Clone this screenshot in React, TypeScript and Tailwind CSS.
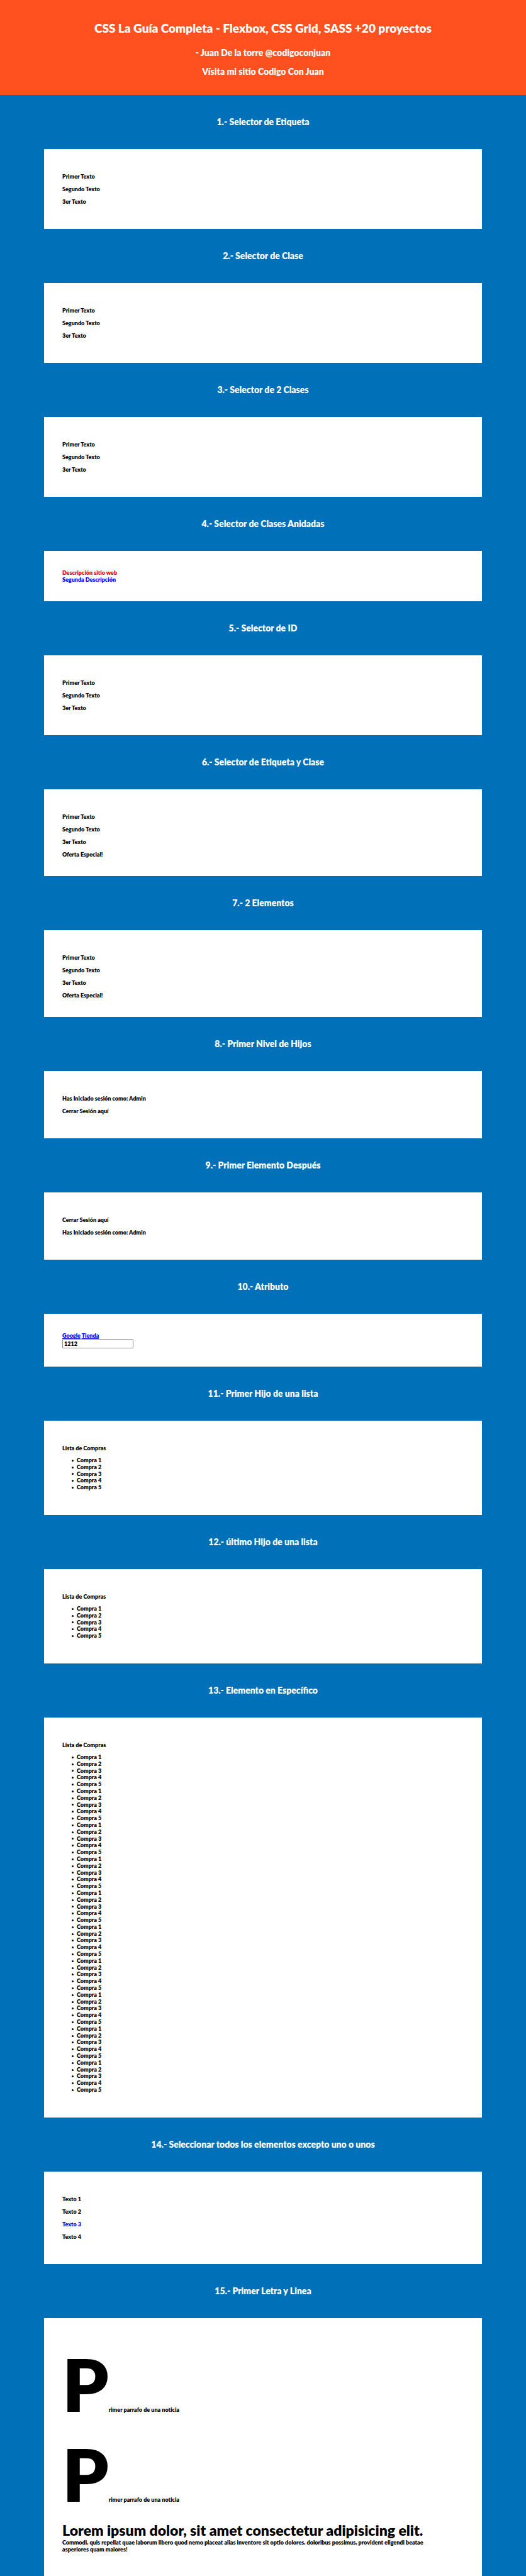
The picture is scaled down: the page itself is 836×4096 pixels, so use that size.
import type { ReactNode } from "react";

type SectionProps = { id: string; title: string; children: ReactNode };

function Section({ id, title, children }: SectionProps) {
  return (
    <section className="px-[70px]">
      <h2 id={id} className="py-[35px] text-center text-[14px] leading-4 text-white">
        {title}
      </h2>
      <div className="bg-white px-[29px] py-[29px]">{children}</div>
    </section>
  );
}

function Texts({ items }: { items: string[] }) {
  return (
    <div className="flex flex-col gap-[9px] py-[9px]">
      {items.map((item) => (
        <p key={item} className={item === "Texto 3" ? "text-[#0000ff]" : "text-black"}>
          {item}
        </p>
      ))}
    </div>
  );
}

function Offer() {
  return (
    <>
      <Texts items={["Primer Texto", "Segundo Texto", "3er Texto"]} />
      <div>Oferta Especial!</div>
    </>
  );
}

function Shopping({ rounds }: { rounds: number }) {
  const items = Array.from({ length: rounds * 5 }, (_, i) => (i % 5) + 1);
  return (
    <div className="flex flex-col gap-[9px] py-[9px]">
      <p>Lista de Compras</p>
      <ul className="pl-[15px] leading-[1.2]">
        {items.map((n, i) => (
          <li
            key={i}
            className="flex items-center gap-[5px] before:size-[3px] before:rounded-full before:bg-black before:content-['']"
          >
            Compra {n}
          </li>
        ))}
      </ul>
    </div>
  );
}

export default function App() {
  const three = ["Primer Texto", "Segundo Texto", "3er Texto"];
  return (
    <div className="min-h-screen bg-[#0071b9] font-['Lato',sans-serif] text-[9px] leading-[11px] font-extrabold text-black">
      <header className="bg-[#ff5020] pt-[34px] pb-[29px] text-center text-white">
        <h1 className="mb-5 text-[19px] leading-[22px]">
          CSS La Guía Completa - Flexbox, CSS Grid, SASS +20 proyectos
        </h1>
        <div className="flex flex-col gap-[14px] text-[14px] leading-4">
          <p>- Juan De la torre @codigoconjuan</p>
          <p>Vísita mi sitio Codigo Con Juan</p>
        </div>
      </header>
      <main>
        <Section id="s1" title="1.- Selector de Etiqueta">
          <Texts items={three} />
        </Section>
        <Section id="s2" title="2.- Selector de Clase">
          <Texts items={three} />
        </Section>
        <Section id="s3" title="3.- Selector de 2 Clases">
          <Texts items={three} />
        </Section>
        <Section id="s4" title="4.- Selector de Clases Anidadas">
          <div className="text-[#ff0000]">Descripción sitio web</div>
          <div className="text-[#0000ff]">Segunda Descripción</div>
        </Section>
        <Section id="s5" title="5.- Selector de ID">
          <Texts items={three} />
        </Section>
        <Section id="s6" title="6.- Selector de Etiqueta y Clase">
          <Offer />
        </Section>
        <Section id="s7" title="7.- 2 Elementos">
          <Offer />
        </Section>
        <Section id="s8" title="8.- Primer Nivel de Hijos">
          <Texts items={["Has Iniciado sesión como: Admin", "Cerrar Sesión aquí"]} />
        </Section>
        <Section id="s9" title="9.- Primer Elemento Después">
          <Texts items={["Cerrar Sesión aquí", "Has Iniciado sesión como: Admin"]} />
        </Section>
        <Section id="s10" title="10.- Atributo">
          <div className="text-[#0000ee]">
            <a href="#google" className="underline">Google</a>{" "}
            <a href="#tienda" className="underline">Tienda</a>
          </div>
          <input
            type="text"
            defaultValue="1212"
            aria-labelledby="s10"
            className="block h-[15px] w-[113px] rounded-[2px] border border-[#8f8f9d] bg-white px-[2px]"
          />
        </Section>
        <Section id="s11" title="11.- Primer Hijo de una lista">
          <Shopping rounds={1} />
        </Section>
        <Section id="s12" title="12.- último Hijo de una lista">
          <Shopping rounds={1} />
        </Section>
        <Section id="s13" title="13.- Elemento en Específico">
          <Shopping rounds={10} />
        </Section>
        <Section id="s14" title="14.- Seleccionar todos los elementos excepto uno o unos">
          <Texts items={["Texto 1", "Texto 2", "Texto 3", "Texto 4"]} />
        </Section>
        <Section id="s15" title="15.- Primer Letra y Linea">
          <div className="flex flex-col gap-[9px] py-[9px]">
            <p className="first-letter:text-[116px] first-letter:leading-[134px]">
              Primer parrafo de una noticia
            </p>
            <p className="first-letter:text-[116px] first-letter:leading-[134px]">
              Primer parrafo de una noticia
            </p>
            <p className="first-line:text-[23px] first-line:leading-[27px]">
              Lorem ipsum dolor, sit amet consectetur adipisicing elit. Commodi, quis repellat quae laborum
              libero quod nemo placeat alias inventore sit optio dolores, doloribus possimus, provident
              eligendi beatae
              <br />
              asperiores quam maiores!
            </p>
          </div>
        </Section>
      </main>
    </div>
  );
}
